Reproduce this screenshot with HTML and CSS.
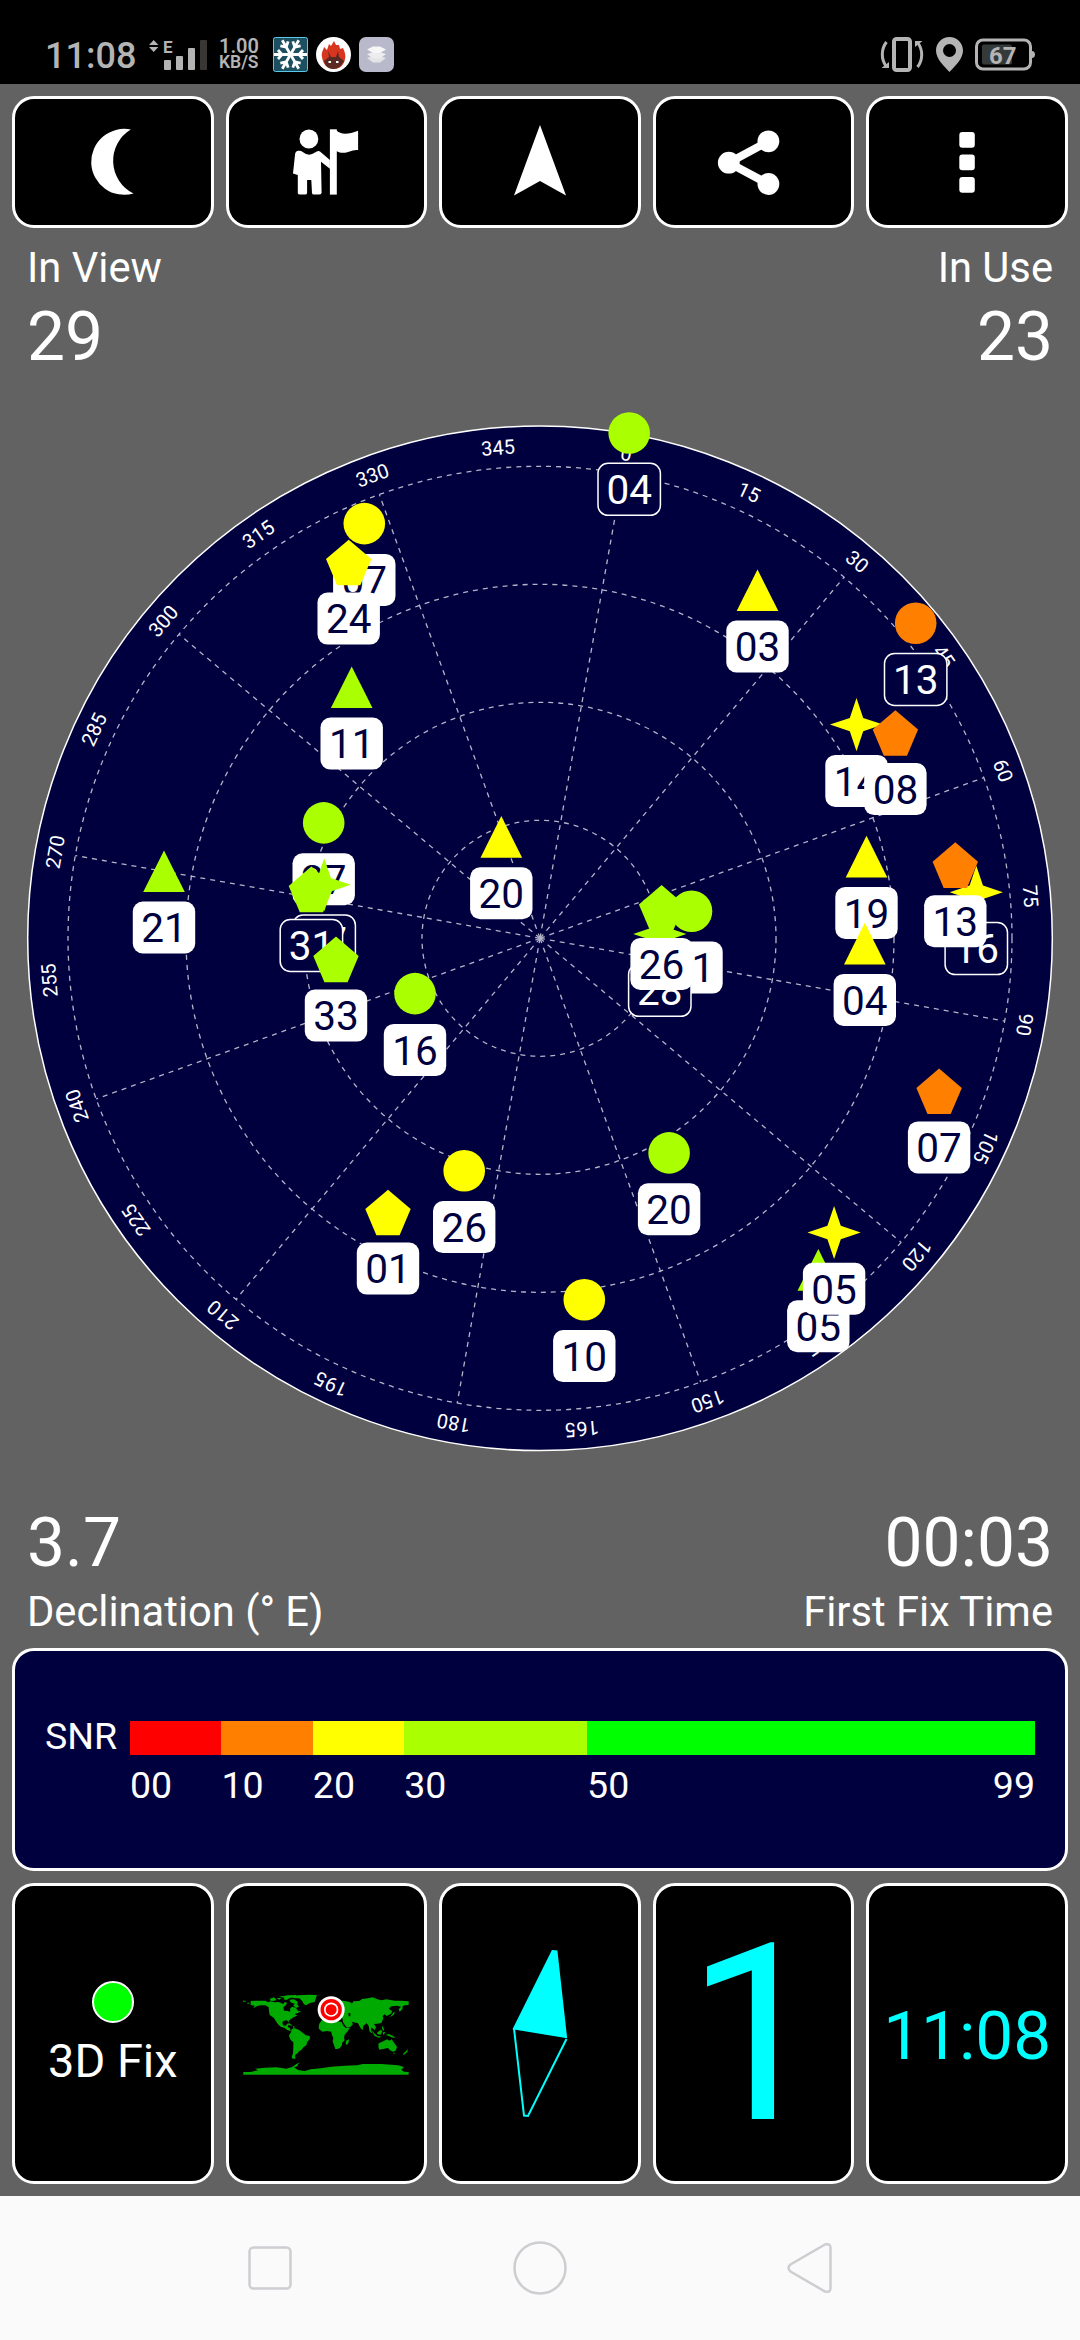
FILE: index.html
```html
<!DOCTYPE html>
<html lang="en">
<head>
    <meta charset="UTF-8">
    <meta name="viewport" content="width=device-width, initial-scale=1.0">
    <title>GPS Status</title>
    <link rel="stylesheet" href="styles.css">
</head>
<body>

<header class="status-bar">
    <div class="status-left">
        <span class="status-time">11:08</span>
        <svg class="signal" width="58" height="32" viewBox="0 0 58 32">
            <path d="M4.700 2 L9.400 7 H0 Z M4.700 14 L9.400 9 H0 Z"/>
            <text x="14" y="15">E</text>
            <rect x="15" y="22" width="7" height="10" rx="1"/>
            <rect x="27" y="18" width="7" height="14" rx="1"/>
            <rect x="39" y="10" width="7" height="22" rx="1"/>
            <rect class="signal-off" x="51" y="2" width="7" height="30" rx="1"/>
        </svg>
        <div class="net-speed">
            <span>1.00</span>
            <span class="net-unit">KB/S</span>
        </div>
        <div class="status-apps">
            <svg width="35" height="35" viewBox="0 0 35 35">
                <rect x="0.500" y="0.500" width="34" height="34" rx="2" fill="#1c4f60" stroke="#5cc8e8"/>
                <g stroke="#fff" stroke-width="2.800" fill="none">
                    <path d="M1 17.500 H34 M5 13 L9 17.500 L5 22 M30 13 L26 17.500 L30 22"/>
                    <path d="M1 17.500 H34 M5 13 L9 17.500 L5 22 M30 13 L26 17.500 L30 22" transform="rotate(60 17.500 17.500)"/>
                    <path d="M1 17.500 H34 M5 13 L9 17.500 L5 22 M30 13 L26 17.500 L30 22" transform="rotate(120 17.500 17.500)"/>
                </g>
            </svg>
            <svg width="35" height="35" viewBox="0 0 35 35">
                <circle cx="17.500" cy="17.500" r="17.500" fill="#fff"/>
                <path d="M6 20 C5 16 7 14 8 10 L11 13 L13 7 L15 9 L18 4 L20 8 L23 8 L24 12 L27 11 C29 15 30 19 29 22 C28 28 24 32 17.500 32 C11 32 7 27 6 20 Z" fill="#d8351f"/>
                <path d="M12 14 L15 20 H20 L22 14 L23 20 L28 24 C25 29 22 32 17.500 32 C13 32 9 29 8 24 L13 20 Z" fill="#5a2a22"/>
                <path d="M12.500 24 h2.500 v2 h-2.500 Z M20 24 h2.500 v2 H20 Z" fill="#fff"/>
            </svg>
            <svg width="35" height="35" viewBox="0 0 35 35">
                <rect width="35" height="35" rx="7" fill="#b9b9cc"/>
                <path d="M8 21 L17.500 18 L27 21 L21 25.500 H14 Z" fill="#e4e4e6"/>
                <path d="M8 17 L17.500 14 L27 17 L21 21.500 H14 Z" fill="#ececee"/>
                <path d="M8 12.500 L14 9.500 H21 L27 12.500 L21 16 H14 Z" fill="#f6f6f6"/>
            </svg>
        </div>
    </div>
    <div class="status-right">
        <svg width="44" height="35" viewBox="0 0 44 35">
            <rect x="14" y="2" width="16" height="31" rx="2.500" class="line"/>
            <path d="M6.500 5 C1 12 1 22 6 29 M37.500 30 C43 23 43 13 38 6" class="line thin"/>
            <path d="M1.500 31 H9 V25 Z M42.500 4 H35 V10 Z"/>
        </svg>
        <svg width="27" height="35" viewBox="0 0 27 35">
            <path fill-rule="evenodd" d="M13.500 0 C6 0 0 6 0 13.500 C0 22 8 29 13.500 35 C19 29 27 22 27 13.500 C27 6 21 0 13.500 0 Z M13.500 7 A6.500 6.500 0 1 1 13.500 20 A6.500 6.500 0 1 1 13.500 7 Z"/>
        </svg>
        <svg width="60" height="35" viewBox="0 0 60 35">
            <rect x="1.500" y="3" width="54" height="29" rx="6.500" class="line thin"/>
            <path d="M57 14 C61 14 61 21 57 21 Z"/>
            <rect x="7" y="7.500" width="30" height="20" rx="2" class="battery-level"/>
            <text x="14" y="26.500" class="battery-text">67</text>
        </svg>
    </div>
</header>

<main class="app">
    <nav class="toolbar">
        <button class="tile" type="button" aria-label="Night mode">
            <svg width="72" height="72" viewBox="0 0 72 72">
                <path d="M53.800 3.500 A33 33 0 1 0 56.500 67.500 A36.500 36.500 0 0 1 53.800 3.500 Z"/>
            </svg>
        </button>
        <button class="tile" type="button" aria-label="Guide">
            <svg width="72" height="72" viewBox="0 0 72 72">
                <circle cx="18.900" cy="13" r="9.400"/>
                <rect x="39.900" y="3.300" width="6.900" height="65.300"/>
                <path d="M46 4 C51 9 58 8.500 68.100 4.700 V24 C60 23 56 30 46 25 Z"/>
                <path d="M8.500 24.800 Q11 24.500 12.700 26 Q19 31 25 26.500 Q28 24 30 25.500 L39.900 34 V42.700 L31 35.700 L31.600 67 Q31 68.500 29 68.500 H24 Q22 68.500 22 67 L21.300 54 H17.100 V67 Q17 68.500 15 68.500 H10 Q7.800 68.500 7.800 67 V49 L3 47.500 L5.100 28 Q5.500 25 8.500 24.800 Z"/>
            </svg>
        </button>
        <button class="tile" type="button" aria-label="Navigate">
            <svg width="72" height="72" viewBox="0 0 72 72">
                <path d="M36 -1 L62 69.500 L36 55 L10 69.500 Z"/>
            </svg>
        </button>
        <button class="tile" type="button" aria-label="Share">
            <svg width="72" height="72" viewBox="0 0 72 72">
                <path d="M50.400 15.300 L10.800 36.700 L50.400 58" class="share-line"/>
                <circle cx="50.400" cy="15.300" r="10.900"/>
                <circle cx="10.800" cy="36.700" r="10.900"/>
                <circle cx="50.400" cy="58" r="10.900"/>
            </svg>
        </button>
        <button class="tile" type="button" aria-label="Menu">
            <svg width="72" height="72" viewBox="0 0 72 72">
                <rect x="28.300" y="6" width="15.500" height="15.700" rx="3"/>
                <rect x="28.300" y="28.500" width="15.500" height="15.700" rx="3"/>
                <rect x="28.300" y="51" width="15.500" height="15.700" rx="3"/>
            </svg>
        </button>
    </nav>

    <section class="stats stats-top">
        <div class="stat">
            <div class="stat-label">In View</div>
            <div class="stat-value">29</div>
        </div>
        <div class="stat stat-right">
            <div class="stat-label">In Use</div>
            <div class="stat-value">23</div>
        </div>
    </section>

    <svg id="sky" class="sky" width="1080" height="1126" viewBox="-540 -561.300 1080 1126">
        <circle class="horizon" r="512.300"/>
        <g id="grid"></g>
        <g id="satellites"></g>
    </svg>

    <section class="stats stats-bottom">
        <div class="stat">
            <div class="stat-value">3.7</div>
            <div class="stat-label">Declination (° E)</div>
        </div>
        <div class="stat stat-right">
            <div class="stat-value">00:03</div>
            <div class="stat-label">First Fix Time</div>
        </div>
    </section>

    <section class="snr">
        <div class="snr-title">SNR</div>
        <div class="snr-scale">
            <div class="snr-part red">00</div>
            <div class="snr-part orange">10</div>
            <div class="snr-part yellow">20</div>
            <div class="snr-part lime">30</div>
            <div class="snr-part green"><span>50</span><span>99</span></div>
        </div>
    </section>

    <section class="panels">
        <div class="tile fix">
            <span class="fix-dot"></span>
            <span class="fix-text">3D Fix</span>
        </div>
        <div class="tile">
            <svg class="map" width="166" height="80" viewBox="25 45 498 240">
                <path d="M25 62 h8 v3 h-8 Z M38 68 h6 v3 h-6 Z M48 63 L62 62 H92 L100 67 L108 64 L120 67 L132 66 L146 72 L150 66 L157 68 L154 75 L146 82 L148 92 L160 93 L166 96 L167 84 L174 80 L184 84 L190 93 L199 94 L190 99 L180 102 L188 107 L176 112 L170 116 L162 122 L163 128 L157 121 L146 123 L143 127 L145 136 L153 137 L158 132 L162 133 L159 141 L166 144 L167 152 L178 149 L172 155 L158 150 L148 143 L138 140 L130 133 L124 124 L117 113 L105 105 L103 93 L102 82 L92 76 L78 76 L66 79 L55 85 L60 77 L48 75 Z"/>
                <path d="M106 56 L118 52 L126 60 L116 63 L107 62 Z M125 55 L140 53 L135 59 Z M133 50 L160 46 L186 45 L180 52 L165 54 L156 60 L146 58 L150 53 Z M164 59 L178 58 L190 66 L187 72 L193 80 L184 84 L175 76 L181 72 L168 67 Z M172 51 L190 46 L222 44 L247 45 L243 56 L240 66 L228 68 L214 76 L208 73 L202 62 L194 55 L178 55 Z M155 132 L164 130 L174 137 L162 136 Z M174 138 L182 141 L176 144 Z"/>
                <path d="M171 148 L178 144 L192 149 L200 155 L208 161 L212 165 L226 169 L225 178 L218 185 L215 196 L206 202 L201 209 L193 214 L189 220 L183 223 L181 230 L183 236 L174 236 L171 231 L175 220 L176 202 L176 187 L168 180 L163 168 L165 162 L170 156 Z"/>
                <path d="M254 131 L261 121 L270 119 L292 120 L307 124 L321 126 L325 136 L333 144 L345 144 L338 155 L330 164 L328 174 L330 181 L322 189 L322 195 L316 204 L308 207 L302 207 L298 196 L294 184 L296 174 L291 163 L290 155 L276 153 L263 155 L253 147 L252 139 Z M334 182 L343 178 L342 187 L337 195 L333 192 Z"/>
                <path d="M256 112 L259 101 L270 99 L266 94 L283 89 L294 82 L292 70 L303 63 L326 62 L346 66 L352 71 L356 64 L374 63 L382 57 L400 55 L414 52 L426 57 L440 61 L455 58 L480 62 L500 62 L522 64 V75 L510 76 L504 79 L503 88 L495 95 L492 88 L499 80 L487 77 L470 79 L462 86 L473 94 L468 102 L456 108 L450 103 L444 108 L446 115 L440 129 L427 131 L418 132 L424 142 L420 150 L410 142 L409 152 L415 161 L405 155 L402 138 L396 130 L386 137 L384 151 L377 143 L370 130 L351 125 L355 132 L347 141 L337 143 L330 134 L325 126 L323 115 L310 111 L303 108 L305 115 L296 107 L285 108 L276 112 L263 116 Z"/>
                <path d="M341 99 h6 v10 h-5 Z" class="sea-cut"/>
                <path d="M410 150 L424 165 L430 169 L440 169 L433 173 L420 168 Z M427 158 L438 149 L443 154 L438 164 L429 163 Z M444 157 L452 156 L447 166 Z M441 136 L447 145 L449 153 L443 149 Z M452 165 L463 162 L475 168 L482 174 L470 172 L463 168 Z M464 112 L477 105 L481 97 L477 97 L470 106 Z"/>
                <path d="M432 190 L446 184 L457 178 L465 182 L471 178 L478 188 L487 200 L483 212 L475 215 L466 211 L460 204 L449 206 L434 209 L431 200 Z M475 218 h6 l-3 5 Z M515 212 L520 208 L518 216 L507 225 L505 222 Z"/>
                <path d="M26 276 H48 L70 271 L61 266 L90 263 L126 262 L155 266 L174 260 L185 252 L197 247 L190 253 L188 259 L178 262 L190 270 L210 273 L228 268 L258 265 L290 260 L330 257 L368 256 L384 252 L440 252 L490 256 L508 261 L500 269 L508 275 L522 276 V284 H26 Z"/>
                <circle class="pin-white" cx="289.500" cy="89" r="40.500"/>
                <circle class="pin-red" cx="289.500" cy="89" r="32"/>
                <circle class="pin-white" cx="289.500" cy="89" r="21.500"/>
                <circle class="pin-red" cx="289.500" cy="89" r="16.500"/>
            </svg>
        </div>
        <div class="tile">
            <svg class="compass" width="60" height="170" viewBox="0 0 60 170">
                <path class="needle" d="M42.500 2 L46.500 2.500 L56 88 L4 79.500 Z"/>
                <path class="tail" d="M4 79.500 L14 166.500 L18 167 L56.500 90"/>
            </svg>
        </div>
        <div class="tile count">1</div>
        <div class="tile clock">11:08</div>
    </section>
</main>

<footer class="nav-bar">
    <svg width="60" height="60" viewBox="0 0 60 60"><rect x="9.500" y="9.500" width="41" height="41" rx="4"/></svg>
    <svg width="60" height="60" viewBox="0 0 60 60"><circle cx="30" cy="30" r="25.500"/></svg>
    <svg width="60" height="60" viewBox="0 0 60 60"><path d="M45 6.500 L10.500 26.500 Q6.500 30 10.500 33.500 L45 53.500 Q50.500 55 50.500 50 V10 Q50.500 5 45 6.500 Z"/></svg>
</footer>

<script src="sky.js"></script>
</body>
</html>
```

FILE: styles.css
```css
body {
    margin: 0;
    width: 1080px;
    height: 2340px;
    display: flex;
    flex-direction: column;
    background: #626262;
    color: #fff;
    font-family: Roboto, sans-serif;
    overflow: hidden;
}

/* status bar */
.status-bar {
    height: 84px;
    box-sizing: border-box;
    padding: 24px 45px 0 45px;
    display: flex;
    justify-content: space-between;
    align-items: center;
    background: #000;
    color: #b4b4b4;
    fill: #b4b4b4;
}
.status-left, .status-right, .status-apps {
    display: flex;
    align-items: center;
}
.status-time {
    width: 104px;
    font-size: 36px;
    font-weight: 500;
    line-height: 40px;
    padding-top: 3px;
}
.signal {
    font-size: 17px;
    font-weight: 700;
}
.signal-off {
    fill: #3a3636;
}
.net-speed {
    display: flex;
    flex-direction: column;
    width: 54px;
    margin-left: 12px;
    font-size: 20px;
    font-weight: 600;
    line-height: 16px;
}
.net-unit {
    font-size: 17.500px;
}
.status-apps {
    gap: 8px;
}
.status-right {
    gap: 12px;
}
.line {
    fill: none;
    stroke: #b4b4b4;
    stroke-width: 4px;
}
.thin {
    stroke-width: 3px;
}
.battery-level {
    fill: #343a3a;
}
.battery-text {
    font-size: 24px;
    font-weight: 700;
}

/* app */
.app {
    flex: 1;
    display: flex;
    flex-direction: column;
    padding: 12px 0;
}
.toolbar, .panels {
    display: grid;
    grid-template-columns: repeat(5, 1fr);
    gap: 12px;
    margin: 0 12px;
}
.toolbar {
    height: 132px;
}
.tile {
    display: flex;
    align-items: center;
    justify-content: center;
    box-sizing: border-box;
    padding: 0;
    border: 3px solid #fff;
    border-radius: 22px;
    background: #000;
    fill: #fff;
    min-width: 0;
}
.tile svg {
    overflow: visible;
}
.share-line {
    fill: none;
    stroke: #fff;
    stroke-width: 8px;
}

.stats {
    display: flex;
    justify-content: space-between;
    padding: 0 27px;
}
.stats-top {
    padding-top: 15px;
}
.stat {
    display: flex;
    flex-direction: column;
    gap: 5px;
}
.stats-bottom .stat {
    gap: 4px;
}
.stat-right {
    text-align: right;
}
.stat-label {
    font-size: 41.700px;
    line-height: 49px;
}
.stat-value {
    font-size: 67.700px;
    line-height: 80px;
}

/* sky plot */
.sky {
    display: block;
    flex: none;
}
.horizon {
    fill: #00003f;
    stroke: #fff;
    stroke-width: 1.500px;
}
.grid-line {
    fill: none;
    stroke: #b4b4c8;
    stroke-width: 1.300px;
    stroke-dasharray: 5 5;
}
.degree {
    font-size: 20px;
    fill: #fff;
    text-anchor: middle;
}
.sat-box {
    fill: #fff;
}
.sat-text {
    font-size: 40.500px;
    fill: #00003f;
    text-anchor: middle;
}
.unused .sat-box {
    fill: #00003f;
    stroke: #fff;
    stroke-width: 1.500px;
}
.unused .sat-text {
    fill: #fff;
}
.sat-lime {
    fill: #aaff00;
}
.sat-yellow {
    fill: #ffff00;
}
.sat-orange {
    fill: #ff8000;
}

/* SNR scale */
.snr {
    display: flex;
    box-sizing: border-box;
    height: 223px;
    margin: 12px 12px 12px;
    padding: 70px 30px 0;
    border: 3px solid #fff;
    border-radius: 22px;
    background: #00003f;
    font-size: 37.500px;
}
.snr-title {
    width: 85px;
    line-height: 30px;
}
.snr-scale {
    flex: 1;
    display: grid;
    grid-template-columns: 10fr 10fr 10fr 20fr 49fr;
}
.snr-part {
    border-top: 34px solid;
    border-color: var(--snr);
    padding-top: 8px;
}
.red {
    --snr: #ff0000;
}
.orange {
    --snr: #ff8000;
}
.yellow {
    --snr: #ffff00;
}
.lime {
    --snr: #aaff00;
}
.green {
    --snr: #00ff00;
    display: flex;
    justify-content: space-between;
}

/* bottom panels */
.panels {
    height: 301px;
}
.fix {
    flex-direction: column;
    gap: 10px;
    padding-top: 3px;
}
.fix-dot {
    width: 38px;
    height: 38px;
    border: 2px solid #fff;
    border-radius: 50%;
    background: #00ff00;
}
.fix-text {
    font-size: 47px;
    line-height: 56px;
}
.map {
    fill: #00aa00;
    margin-top: 3px;
}
.sea-cut {
    fill: #000;
}
.pin-white {
    fill: #fff;
}
.pin-red {
    fill: #ff0000;
}
.needle {
    fill: #00ffff;
    stroke: #00ffff;
    stroke-width: 2px;
}
.tail {
    fill: none;
    stroke: #00ffff;
    stroke-width: 2px;
}
.count, .clock {
    color: #00ffff;
}
.count {
    font-size: 246px;
    line-height: 289px;
    padding-left: 4px;
    padding-top: 4px;
}
.clock {
    font-size: 67.500px;
    line-height: 80px;
    padding-top: 5px;
}

/* system navigation */
.nav-bar {
    height: 144px;
    box-sizing: border-box;
    padding: 0 240px;
    display: flex;
    justify-content: space-between;
    align-items: center;
    background: #fafafa;
    fill: none;
    stroke: #cdcdd2;
    stroke-width: 2.500px;
}
```

FILE: sky.js
```js
var heading = 10.1; // rotation of the plot, degrees
var ringStep = 118;

// id, x, y from the zenith, shape, colour, used in fix
var satellites = [
    ['07', -175.7, -414.7, 'circle', 'yellow', true],
    ['04', 89.2, -505.3, 'circle', 'lime', false],
    ['13', 375.7, -315.1, 'circle', 'orange', false],
    ['27', -216.3, -115.4, 'circle', 'lime', true],
    ['21', 151.5, -27, 'circle', 'lime', true],
    ['16', -125, 55.3, 'circle', 'lime', true],
    ['26', -75.8, 232.5, 'circle', 'yellow', true],
    ['20', 129.1, 214.6, 'circle', 'lime', true],
    ['10', 44.3, 361.5, 'circle', 'yellow', true],
    ['03', 217.5, -348.1, 'triangle', 'yellow', true],
    ['11', -188.3, -251, 'triangle', 'lime', true],
    ['20', -38.7, -101.4, 'triangle', 'yellow', true],
    ['21', -376, -67.1, 'triangle', 'lime', true],
    ['19', 326.5, -81.7, 'triangle', 'yellow', true],
    ['04', 324.8, 5.3, 'triangle', 'yellow', true],
    ['05', 278.3, 331.6, 'triangle', 'lime', true],
    ['14', 316.5, -213.7, 'star', 'yellow', true],
    ['07', -215.8, -53.5, 'star', 'lime', false],
    ['16', 436.3, -46, 'star', 'yellow', false],
    ['28', 119.8, -4.3, 'star', 'lime', false],
    ['05', 294.1, 294.2, 'star', 'yellow', true],
    ['24', -191.3, -376, 'pentagon', 'yellow', true],
    ['31', -228.6, -49.1, 'pentagon', 'lime', false],
    ['33', -204, 20.9, 'pentagon', 'lime', true],
    ['08', 355.4, -205.5, 'pentagon', 'orange', true],
    ['13', 415.3, -73.4, 'pentagon', 'orange', true],
    ['26', 121.6, -30.7, 'pentagon', 'lime', true],
    ['07', 399.1, 152.8, 'pentagon', 'orange', true],
    ['01', -152, 274, 'pentagon', 'yellow', true]
];

var shapes = {
    circle: 'M-20.8 0 A20.8 20.8 0 1 1 20.8 0 A20.8 20.8 0 1 1 -20.8 0 Z',
    triangle: 'M0 -20.8 L20.8 20.8 H-20.8 Z',
    star: 'M0 -26.6 L6.7 -6.7 L26.6 0 L6.7 6.7 L0 26.6 L-6.7 6.7 L-26.6 0 L-6.7 -6.7 Z',
    pentagon: 'M0 -22.6 L22.7 -3.2 L11.6 23 H-11.6 L-22.7 -3.2 Z'
};

function drawGrid() {
    var html = '';
    for (var i = 1; i <= 4; i++) {
        html += '<circle class="grid-line" r="' + ringStep * i + '"/>';
    }
    for (var deg = 0; deg < 360; deg += 15) {
        html += '<g transform="rotate(' + (deg + heading) + ')">';
        if (deg % 30 === 0) {
            html += '<path class="grid-line" d="M0 0 V' + (-ringStep * 4) + '"/>';
        }
        html += '<text class="degree" y="-485.4">' + deg + '</text></g>';
    }
    document.getElementById('grid').innerHTML = html;
}

function drawSatellites() {
    var html = '';
    satellites.forEach(function (s) {
        html += '<g class="' + (s[5] ? 'used' : 'unused') + '" transform="translate(' + s[1] + ' ' + s[2] + ')">' +
            '<path class="sat-' + s[4] + '" d="' + shapes[s[3]] + '"/>' +
            '<rect class="sat-box" x="-31.2" y="30.3" width="62.4" height="52" rx="10"/>' +
            '<text class="sat-text" y="71">' + s[0] + '</text></g>';
    });
    document.getElementById('satellites').innerHTML = html;
}

drawGrid();
drawSatellites();
```
